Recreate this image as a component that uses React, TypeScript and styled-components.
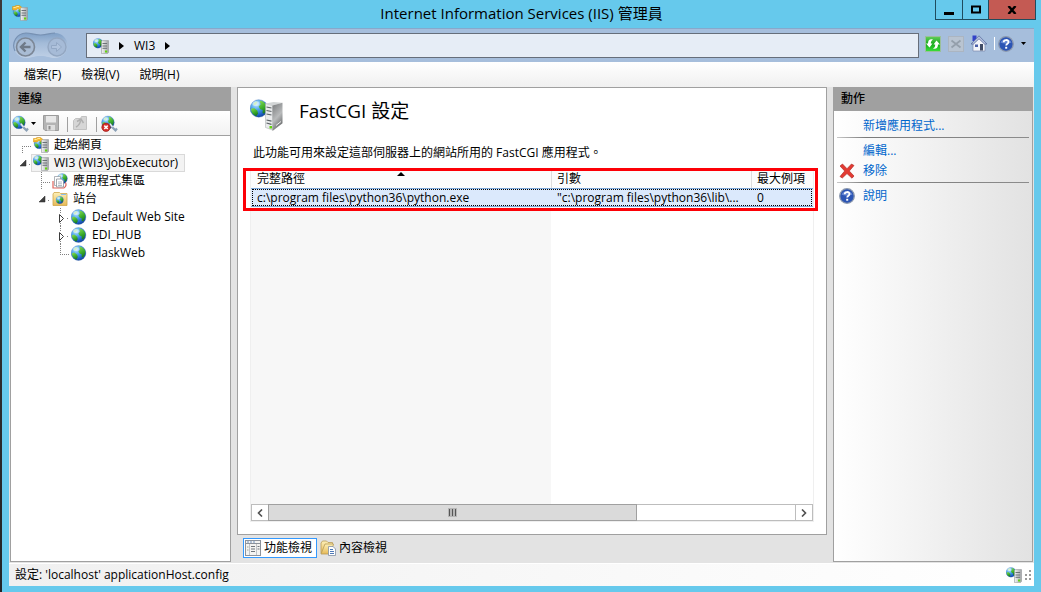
import React, { useState } from "react";
import styled, { createGlobalStyle, css } from "styled-components";

const GlobalStyle = createGlobalStyle`
  * { box-sizing: border-box; }
  body {
    margin: 0;
    font-family: "Open Sans", "Noto Sans CJK TC", sans-serif;
    font-size: 12px;
    line-height: 18px;
    color: #000;
  }
  button {
    font: inherit;
    color: inherit;
    background: none;
    border: 0;
    padding: 0;
    margin: 0;
  }
  svg { display: block; flex: none; }
`;

const Desktop = styled.div`
  display: flex;
  min-height: 100vh;
  padding-left: 2px;
  background: linear-gradient(#3c3838, #232426);
`;

const Window = styled.div`
  flex: 1;
  min-width: 0;
  display: flex;
  flex-direction: column;
  padding: 0 7px 6px;
  background: #66c9ec;
`;

const TitleBar = styled.header`
  display: grid;
  grid-template-columns: 1fr auto 1fr;
  height: 28px;
`;

const TitleIcon = styled.div`
  padding: 5px 0 0 3px;
`;

const Title = styled.h1`
  margin: 0;
  font-size: 15px;
  font-weight: 400;
  line-height: 26px;
  white-space: nowrap;
`;

const WindowButtons = styled.div`
  justify-self: end;
  display: flex;
  height: 20px;
  margin-right: -2px;
  border: 1px solid #1f4c5e;
  border-top: 0;
`;

const WindowButton = styled.button<{ $close?: boolean }>`
  display: flex;
  align-items: center;
  justify-content: center;
  width: ${(p) => (p.$close ? 47 : 26)}px;
  background: ${(p) => (p.$close ? "#c45a53" : "transparent")};
  & + & { border-left: 1px solid #1f4c5e; }
`;

const Client = styled.div`
  flex: 1;
  display: flex;
  flex-direction: column;
  background: #e3e3e3;
`;

const NavBar = styled.div`
  display: flex;
  align-items: center;
  height: 34px;
  padding: 0 8px 0 4px;
  border-top: 1px solid #86a9cc;
  background: #a6bedc;
`;

const AddressBar = styled.nav`
  flex: 1;
  display: flex;
  align-items: center;
  gap: 10px;
  height: 25px;
  margin: 0 6px 0 18px;
  padding: 0 6px;
  border: 1px solid #666e7a;
  background: #e6edf6;
`;

const NavTools = styled.div`
  display: flex;
  align-items: center;
  gap: 7px;
  padding-bottom: 4px;
`;

const IconButton = styled.button`
  display: flex;
  align-items: center;
`;

const ToolMenuButton = styled(IconButton)`
  margin: 0 3px 0 -2px;
`;

const NavSeparator = styled.span`
  width: 1px;
  height: 13px;
  background: #fff;
  margin-right: -4px;
`;

const MenuBar = styled.nav`
  display: flex;
  align-items: center;
  gap: 20px;
  height: 25px;
  padding-left: 15px;
  background: linear-gradient(#fff, #f0f0f0);
`;

const Workspace = styled.main`
  flex: 1;
  display: grid;
  grid-template-columns: 221px minmax(0, 1fr) 200px;
  gap: 6px;
  padding: 0 1px 1px;
`;

const Pane = styled.section<{ $shaded?: boolean }>`
  display: flex;
  flex-direction: column;
  border: 1px solid #a0a0a0;
  border-top: 0;
  background: ${(p) => (p.$shaded ? "linear-gradient(90deg, #fff, #e2e2e2)" : "#fff")};
`;

const PaneTitle = styled.h2`
  margin: 0;
  height: 24px;
  padding-left: 7px;
  font-size: 12px;
  font-weight: 500;
  line-height: 24px;
  background: #a0a0a0;
`;

const TreeToolbar = styled.div`
  display: flex;
  align-items: center;
  height: 25px;
  padding-left: 1px;
  gap: 4px;
  border-bottom: 1px solid #a0a0a0;
  background: linear-gradient(#fff, #f2f2f2);
`;

const ToolSeparator = styled.span`
  width: 1px;
  height: 15px;
  margin: 2px 0 0 4px;
  background: #a0a0a0;
`;

const Tree = styled.ul`
  list-style: none;
  margin: 0;
  padding: 0 0 0 3px;
`;

const TreeRow = styled.li<{ $level: number }>`
  display: flex;
  height: 18px;
  padding-left: ${(p) => p.$level * 19}px;
`;

const TreeLabel = styled.span<{ $selected?: boolean }>`
  display: flex;
  align-items: center;
  gap: 5px;
  padding: 0 6px 0 1px;
  line-height: 16px;
  white-space: nowrap;
  border: 1px solid ${(p) => (p.$selected ? "#d9d9d9" : "transparent")};
  background: ${(p) => (p.$selected ? "#f3f3f3" : "transparent")};
`;

const Center = styled.div`
  display: flex;
  flex-direction: column;
`;

const Feature = styled.section`
  flex: 1;
  display: flex;
  flex-direction: column;
  padding: 10px 12px 12px;
  border: 1px solid #a0a0a0;
  background: #fff;
`;

const FeatureHeader = styled.div`
  display: flex;
  gap: 14px;
  height: 46px;
`;

const FeatureTitle = styled.h2`
  margin: 0;
  font-size: 19px;
  font-weight: 400;
  line-height: 27px;
`;

const Description = styled.p`
  margin: 0;
  padding-left: 3px;
  height: 26px;
  white-space: nowrap;
`;

const ListBox = styled.div`
  position: relative;
  flex: 1;
  display: flex;
  flex-direction: column;
  border: 1px solid #efefef;
  border-top: 0;
`;

const ListBody = styled.div`
  flex: 1;
  background: linear-gradient(90deg, #f7f7f7 300px, #fff 300px);
`;

const Highlight = styled.div`
  position: absolute;
  top: -2px;
  left: -8px;
  right: -5px;
  height: 43px;
  border: 3px solid #fd0006;
  pointer-events: none;
`;

const AppTable = styled.table`
  width: 100%;
  table-layout: fixed;
  border-collapse: separate;
  border-spacing: 0;
`;

const HeaderCell = styled.th<{ $width?: number }>`
  position: relative;
  width: ${(p) => (p.$width ? p.$width + "px" : "auto")};
  height: 18px;
  padding: 0 0 0 6px;
  font-weight: 400;
  line-height: 18px;
  text-align: left;
  white-space: nowrap;
  background: #fcfcfc;
  & + & { padding-left: 5px; border-left: 1px solid #dedede; }
`;

const SortMark = styled.span`
  position: absolute;
  top: 2px;
  left: 50%;
  margin-left: -4px;
  border: 4px solid transparent;
  border-top: 0;
  border-bottom-color: #000;
`;

const Cell = styled.td`
  height: 19px;
  padding: 0 6px;
  line-height: 15px;
  white-space: nowrap;
`;

const SelectedRow = styled.tr`
  background: #dbe9fc;
  box-shadow: inset 0 1px #7da7d8, inset 0 -1px #7da7d8;
  outline: 1px dotted #000;
  outline-offset: -2px;
`;

const ScrollBar = styled.div`
  display: flex;
  height: 17px;
  border: 1px solid #bdbdbd;
`;

const ScrollArrow = styled.button`
  display: flex;
  align-items: center;
  justify-content: center;
  width: 16px;
  background: #fff;
`;

const ScrollTrack = styled.div`
  flex: 1;
  display: flex;
  margin: -1px 0;
  border-right: 1px solid #bdbdbd;
`;

const ScrollThumb = styled.div`
  display: flex;
  align-items: center;
  justify-content: center;
  gap: 2px;
  width: 70%;
  border: 1px solid #a0a0a0;
  background: #dadada;
  & > i { width: 1px; height: 7px; outline: 1px solid #70707055; background: #555; }
`;

const ViewTabs = styled.div`
  display: flex;
  gap: 1px;
  height: 27px;
  padding: 3px 0 4px 6px;
`;

const ViewTab = styled.button<{ $active?: boolean }>`
  display: flex;
  align-items: center;
  gap: 3px;
  padding: 0 4px 0 1px;
  border: 1px solid transparent;
  ${(p) => p.$active && css`
    border-color: #3399ff;
    background: #fff;
  `}
`;

const Actions = styled.div`
  padding: 4px 3px;
`;

const Rule = styled.hr`
  height: 1px;
  margin: 2px 0;
  border: 0;
  background: linear-gradient(90deg, #c8c8c8, #7a7a7a 15%, #8c8c8c);
`;

const ActionLink = styled.a`
  display: grid;
  grid-template-columns: 16px 1fr;
  gap: 8px;
  align-items: center;
  height: 20px;
  padding: 2px 0 0 2px;
  color: #0066cc;
  text-decoration: none;
`;

const StatusBar = styled.footer`
  display: flex;
  align-items: center;
  justify-content: space-between;
  height: 23px;
  padding: 0 2px 0 6px;
  border-top: 1px solid #fff;
  background: linear-gradient(90deg, #f0f0f0, #fff);
`;

const StatusIcons = styled.div`
  display: flex;
  align-items: center;
  gap: 2px;
`;

const Definitions = styled.svg`
  position: absolute;
`;

function Gradients() {
  return (
    <Definitions width="0" height="0" aria-hidden="true">
      <defs>
        <radialGradient id="sea" cx="0.35" cy="0.25" r="0.85">
          <stop offset="0" stopColor="#c4ecff" />
          <stop offset="0.4" stopColor="#4aa3ec" />
          <stop offset="0.75" stopColor="#1d5fc4" />
          <stop offset="1" stopColor="#0d3488" />
        </radialGradient>
        <linearGradient id="land" x1="0" x2="0.4" y1="0" y2="1">
          <stop offset="0" stopColor="#8fdc5a" />
          <stop offset="0.6" stopColor="#3fb02c" />
          <stop offset="1" stopColor="#1c7d22" />
        </linearGradient>
        <linearGradient id="case" x1="0" x2="1">
          <stop offset="0" stopColor="#f4f4f4" />
          <stop offset="1" stopColor="#a0a3a6" />
        </linearGradient>
        <linearGradient id="caseSide" x1="0" x2="0.4" y2="1">
          <stop offset="0" stopColor="#77797b" />
          <stop offset="0.6" stopColor="#b9bbbc" />
          <stop offset="1" stopColor="#6d6f70" />
        </linearGradient>
        <linearGradient id="folder" x1="0" x2="0" y1="0" y2="1">
          <stop offset="0" stopColor="#fdf0b8" />
          <stop offset="1" stopColor="#e6b956" />
        </linearGradient>
        <linearGradient id="greenTile" x1="0" x2="0" y1="0" y2="1">
          <stop offset="0" stopColor="#63cf5a" />
          <stop offset="0.5" stopColor="#16a81c" />
          <stop offset="1" stopColor="#3be03a" />
        </linearGradient>
        <linearGradient id="pill" x1="0" x2="0" y1="0" y2="1">
          <stop offset="0" stopColor="#7f9fc6" />
          <stop offset="0.4" stopColor="#a3bbd8" />
          <stop offset="1" stopColor="#bfd0e6" />
        </linearGradient>
      </defs>
    </Definitions>
  );
}

/* Globe in a 16 unit box */
const GlobeShape = () => (
  <g>
    <circle cx="7.5" cy="8" r="7.4" fill="url(#sea)" stroke="#3a68ad" strokeWidth="0.3" />
    <path d="M8.200 1.400C11 1.200 13.400 3.600 14.400 6.400L13.800 9.800 12 12.600 10.600 11.800 10.800 9.400 8.600 8.600 7.400 6.400 9 4.600z" fill="url(#land)" />
    <path d="M.8 8.200L3.400 7.600 6.200 9.800 6.800 12 5.400 14.600C2.800 13.600 1 11.400.8 8.200z" fill="url(#land)" />
    <path d="M3.400 3.200L6.200 2 5.400 4.600 3 5.400z" fill="#b5e8a0" />
    <ellipse cx="5" cy="4" rx="3" ry="2" fill="#fff" opacity="0.4" />
  </g>
);

const Globe = () => (
  <svg width="16" height="16" viewBox="0 0 16 16"><GlobeShape /></svg>
);

const ServerIcon = ({ home }: { home?: boolean }) => (
  <svg width="16" height="16" viewBox="0 0 16 16">
    <g transform={home ? "translate(1 1) scale(.7)" : "scale(.66)"}><GlobeShape /></g>
    {home && (
      <g>
        <path d="M.5 1.500h1.800L4 .5h3.500L10 2.500v2H7.500L6 3.500 4 5H.5z" fill="#f6b92e" stroke="#cf8d12" strokeWidth=".5" />
        <path d="M1.500 2.500h2L5 1.500h2" fill="none" stroke="#ffe89a" />
      </g>
    )}
    <path d="M8.500 3.400L9.600 2.600h5.900v12l-1 1h-6z" fill="url(#case)" stroke="#93979a" strokeWidth=".6" />
    <path d="M9.500 5.500h4.600M9.500 8h4.600M9.500 10.300h4.600" stroke="#6c7277" strokeWidth="1" />
    <rect x="12" y="12.500" width="2.200" height="2" fill="#62d40c" />
  </svg>
);

const BigServerIcon = () => (
  <svg width="35" height="36" viewBox="0 0 35 36">
    <g transform="translate(0 1) scale(1.18)"><GlobeShape /></g>
    <path d="M15.500 5.500l7 2v24.500l-7-2.500z" fill="#e9ebec" stroke="#a5a9ab" strokeWidth=".5" />
    <path d="M15.500 5.500l8-1.500 9 .8-10 2.700z" fill="#d2d5d6" />
    <path d="M22.500 7.500l10-2.700v20.500l-10 7.700z" fill="url(#caseSide)" />
    <path d="M16.500 9l5 1M16.500 12.500l5 1M16.500 16l5 1M16.500 22l5 1.200M16.500 25l5 1.300" stroke="#5c6266" strokeWidth="1.200" />
    <path d="M26 27.500l5-4" stroke="#ececec" />
    <rect x="19.500" y="28" width="2.500" height="2.500" fill="#62d40c" />
  </svg>
);

const ConnectIcon = ({ off }: { off?: boolean }) => (
  <svg width="17" height="17" viewBox="0 0 17 17">
    <g transform="translate(.5 .5) scale(.86)"><GlobeShape /></g>
    <path d="M8.500 8.500l3 4 3 2.800 1.500-1.700" fill="none" stroke="#8ba0b6" strokeWidth="2.200" />
    <path d="M9 9l2.500 3" stroke="#e6eff7" strokeWidth="1.200" />
    {off && (
      <g>
        <circle cx="5" cy="12.300" r="4.200" fill="#d3302c" stroke="#951410" strokeWidth=".6" />
        <path d="M3.300 10.600l3.400 3.400M6.700 10.600l-3.400 3.400" stroke="#fff" strokeWidth="1.500" />
      </g>
    )}
  </svg>
);

const SaveIcon = () => (
  <svg width="16" height="16" viewBox="0 0 16 16">
    <path d="M.5.5h15v15H2L.5 14z" fill="#b4b4b4" stroke="#9c9c9c" />
    <rect x="3" y="1" width="10" height="6.500" fill="#e8e8e8" />
    <rect x="4" y="10" width="8" height="5.500" fill="#dedede" />
    <rect x="5.500" y="11" width="2" height="3.500" fill="#8c8c8c" />
  </svg>
);

const UpFolderIcon = () => (
  <svg width="16" height="16" viewBox="0 0 16 16">
    <path d="M1.500 5.500l2-2h5l1-2h5v13h-13z" fill="#d6d6d6" stroke="#c2c2c2" />
    <path d="M4 12c2-1 4-3 4.500-6.500M5 6.500l4-2.500 2.500 4" fill="none" stroke="#b0b0b0" strokeWidth="1.500" />
  </svg>
);

const PoolsIcon = () => (
  <svg width="16" height="16" viewBox="0 0 16 16">
    <g transform="translate(5 0) scale(.7)"><GlobeShape /></g>
    <path d="M1 8v7h11" fill="none" stroke="#e0655d" strokeWidth="1.200" />
    <path d="M2.500 3.500h6v9h-6z" fill="#fff" stroke="#9aa1a8" strokeWidth=".8" />
    <path d="M4.500 6h5l2 2v6h-7z" fill="#fff" stroke="#8b9299" strokeWidth=".8" />
    <path d="M6 9h4M6 10.800h4M6 12.500h4" stroke="#9aa7b5" strokeWidth=".8" />
    <path d="M13.500 9.500c1 2 .5 4-1.500 5.500" fill="none" stroke="#e0655d" strokeWidth="1.200" />
  </svg>
);

const SitesIcon = () => (
  <svg width="16" height="16" viewBox="0 0 16 16">
    <path d="M1 3l1-1.500h5.500l1 1h6.500v12H1z" fill="url(#folder)" stroke="#cfa64a" strokeWidth=".8" />
    <path d="M9 3.500h5" stroke="#8fc0e8" />
    <g transform="translate(4 5) scale(.5)"><GlobeShape /></g>
  </svg>
);

const NavPill = () => (
  <svg width="55" height="28" viewBox="0 0 55 28">
    <path d="M13 1c6 0 7 2 14.500 2S36 1 42 1a12.500 12.500 0 0 1 0 25c-6 0-7-2-14.500-2S19 26 13 26A12.500 12.500 0 0 1 13 1z" fill="url(#pill)" />
    <path d="M2 19A12.500 12.500 0 0 1 13 1c6 0 7 2 14.500 2S36 1 42 1" fill="none" stroke="#7791b3" strokeWidth="1.200" />
    <circle cx="12.500" cy="15" r="9" fill="#a9bcd4" stroke="#7c8796" strokeWidth="1.600" />
    <path d="M17.500 15H9M12.500 10.500L8 15l4.500 4.500" fill="none" stroke="#6f7a88" strokeWidth="2.400" />
    <circle cx="44" cy="15" r="9" fill="#a6bbd7" stroke="#93a7c2" strokeWidth="1.400" />
    <path d="M38.500 13.500h5v-3l5 4.500-5 4.500v-3h-5z" fill="#b0c3dd" stroke="#93a8c5" />
  </svg>
);

const RefreshIcon = () => (
  <svg width="16" height="16" viewBox="0 0 16 16">
    <rect x=".5" y=".5" width="15" height="15" fill="url(#greenTile)" stroke="#9ac09a" />
    <path d="M1 7.500L4.500 11.500 7.500 7.500H5.800C5.800 5.500 6.500 4.500 8 3.500 5 2.500 3 4 3 7.500zM15 8.500L11.500 4.500 8.500 8.500H10.200c0 2-.5 3-2.200 4 3 1 5-.5 5-4z" fill="#fff" />
  </svg>
);

const StopIcon = () => (
  <svg width="16" height="16" viewBox="0 0 16 16">
    <rect x=".5" y=".5" width="15" height="15" fill="#b9c4d1" stroke="#abb5c1" />
    <path d="M3.500 4.500l9 7M12.500 4.500l-9 7" stroke="#949fab" strokeWidth="1.800" />
  </svg>
);

const HomeIcon = () => (
  <svg width="16" height="17" viewBox="0 0 16 17">
    <path d="M1.500.5h4V6h-4z" fill="#3342c8" />
    <path d="M2 8.500L8 3l6 5.500v7.500H2z" fill="#f3f5fa" stroke="#7c8bac" strokeWidth=".7" />
    <path d="M8 .8L16 9H13.500L8 3.800 2.500 9H0z" fill="#b3c0dc" stroke="#52649a" strokeWidth=".7" />
    <rect x="4" y="9.500" width="3" height="2.500" fill="#4a5fa8" />
    <rect x="9" y="9" width="3" height="6.500" fill="#414c66" />
  </svg>
);

const HelpIcon = () => (
  <svg width="16" height="16" viewBox="0 0 16 16">
    <circle cx="8" cy="8" r="7.300" fill="#2c55b4" stroke="#8c99ae" strokeWidth="1.300" />
    <path d="M2.500 6.500a6 6 0 0 1 11 0c-3 1.500-8 1.500-11 0z" fill="#7d9de0" opacity=".7" />
    <path d="M5.700 6.300c0-3 4.800-3 4.800-.2 0 1.600-2.300 1.700-2.300 3.500" fill="none" stroke="#fff" strokeWidth="1.800" />
    <rect x="7.200" y="10.800" width="2" height="1.900" fill="#fff" />
  </svg>
);

const RemoveIcon = () => (
  <svg width="16" height="16" viewBox="0 0 16 16">
    <path d="M1 3l2.500-2L8 5.700 12.500 1 15 2.500 10.300 8l4.700 5-2 2.200L8 10.600 3.300 15 1 13.500 5.700 8z" fill="#e33b33" stroke="#a8201b" strokeWidth=".6" />
  </svg>
);

const FeaturesViewIcon = () => (
  <svg width="16" height="16" viewBox="0 0 16 16">
    <rect x=".5" y=".5" width="15" height="15" fill="#f4f4f2" stroke="#8c929a" />
    <path d="M1 3.500h14" stroke="#8c929a" />
    <path d="M2 2h2m1 0h2m1 0h2" stroke="#6e90bd" />
    <path d="M4.500 4v11M11.500 4v11" stroke="#c2c5c9" />
    <path d="M6 6.500h4M6 9h4M6 11.500h4M12.500 6.500h2M12.500 9h2" stroke="#70767c" />
    <path d="M2 7h1.500M2 10h1.500" stroke="#a3a898" />
  </svg>
);

const ContentViewIcon = () => (
  <svg width="16" height="16" viewBox="0 0 16 16">
    <path d="M1 13.500V3l1.500-2h4L8 2.500h4.500V6" fill="url(#folder)" stroke="#b89b57" strokeWidth=".8" />
    <path d="M5 4h8.500l-2.500 10H1z" fill="url(#folder)" stroke="#b89b57" strokeWidth=".8" />
    <path d="M8.500 6.500h4.500l2.500 2.500v6.500h-7z" fill="#fff" stroke="#8190a5" strokeWidth=".8" />
    <path d="M10 9.500h3M10 11.500h4M10 13.500h4" stroke="#4d79b8" />
  </svg>
);

const GripIcon = () => (
  <svg width="8" height="11" viewBox="0 0 8 11" fill="#9a9a9a">
    <path d="M5 0h2v2H5zM5 4h2v2H5zM1 4h2v2H1zM5 8h2v2H5zM1 8h2v2H1z" />
  </svg>
);

const Chevron = () => (
  <svg width="5" height="8" viewBox="0 0 5 8"><path d="M0 0l5 4-5 4z" /></svg>
);

const DropMark = () => (
  <svg width="5" height="3" viewBox="0 0 5 3"><path d="M0 0h5L2.500 3z" /></svg>
);

type Branch = "first" | "open" | "tee" | "closed" | "end";

/* Connector lines and expander for one tree row */
const BranchMark = ({ kind }: { kind: Branch }) => (
  <svg width="17" height="18" viewBox="0 0 17 18" shapeRendering="crispEdges">
    <g stroke="#808080" strokeDasharray="1 1" fill="none">
      {kind === "first" && <path d="M8.500 10v8M8 10.500h11" />}
      {kind === "tee" && <path d="M8.500 0v18M8 10.500h11" />}
      {kind === "end" && <path d="M8.500 0v10M8 10.500h9" />}
      {kind === "open" && <path d="M15 10.500h2" />}
      {kind === "closed" && <path d="M8.500 0v5M8.500 15v3M15 10.500h2" />}
    </g>
    {kind === "open" && (
      <path d="M12 6v6H6z" fill="#404040" stroke="#262626" strokeWidth=".5" shapeRendering="auto" />
    )}
    {kind === "closed" && (
      <path d="M7.500 6.500l4 4-4 4z" fill="#fff" stroke="#3c3c3c" shapeRendering="auto" />
    )}
  </svg>
);

const nodes: { label: string; level: number; branch: Branch; icon: React.ReactNode }[] = [
  { label: "起始網頁", level: 0, branch: "first", icon: <ServerIcon home /> },
  { label: "WI3 (WI3\\JobExecutor)", level: 0, branch: "open", icon: <ServerIcon /> },
  { label: "應用程式集區", level: 1, branch: "tee", icon: <PoolsIcon /> },
  { label: "站台", level: 1, branch: "open", icon: <SitesIcon /> },
  { label: "Default Web Site", level: 2, branch: "closed", icon: <Globe /> },
  { label: "EDI_HUB", level: 2, branch: "closed", icon: <Globe /> },
  { label: "FlaskWeb", level: 2, branch: "end", icon: <Globe /> },
];

export default function App() {
  const [selected, setSelected] = useState(1);
  return (
    <Desktop>
      <GlobalStyle />
      <Gradients />
      <Window>
        <TitleBar>
          <TitleIcon><ServerIcon home /></TitleIcon>
          <Title>Internet Information Services (IIS) 管理員</Title>
          <WindowButtons>
            <WindowButton aria-label="最小化">
              <svg width="10" height="13"><path d="M0 9h10v3H0z" /></svg>
            </WindowButton>
            <WindowButton aria-label="最大化">
              <svg width="10" height="9"><path d="M1 1.500h8v6H1z" fill="none" stroke="#000" strokeWidth="2" /></svg>
            </WindowButton>
            <WindowButton $close aria-label="關閉">
              <svg width="10" height="8"><path d="M1.500 0l7 8M8.500 0l-7 8" stroke="#000" strokeWidth="2.400" /></svg>
            </WindowButton>
          </WindowButtons>
        </TitleBar>
        <Client>
          <NavBar>
            <NavPill />
            <AddressBar aria-label="位址">
              <ServerIcon />
              <Chevron />
              <span>WI3</span>
              <Chevron />
            </AddressBar>
            <NavTools>
              <IconButton aria-label="重新整理"><RefreshIcon /></IconButton>
              <IconButton aria-label="停止" disabled><StopIcon /></IconButton>
              <IconButton aria-label="首頁"><HomeIcon /></IconButton>
              <NavSeparator />
              <IconButton aria-label="說明"><HelpIcon /></IconButton>
              <IconButton aria-label="更多"><DropMark /></IconButton>
            </NavTools>
          </NavBar>
          <MenuBar>
            <button>檔案(F)</button>
            <button>檢視(V)</button>
            <button>說明(H)</button>
          </MenuBar>
          <Workspace>
            <Pane>
              <PaneTitle>連線</PaneTitle>
              <TreeToolbar>
                <IconButton aria-label="連線"><ConnectIcon /></IconButton>
                <ToolMenuButton aria-label="連線選項"><DropMark /></ToolMenuButton>
                <IconButton aria-label="儲存" disabled><SaveIcon /></IconButton>
                <ToolSeparator />
                <IconButton aria-label="向上" disabled><UpFolderIcon /></IconButton>
                <ToolSeparator />
                <IconButton aria-label="中斷連線"><ConnectIcon off /></IconButton>
              </TreeToolbar>
              <Tree role="tree">
                {nodes.map((n, i) => (
                  <TreeRow
                    key={n.label}
                    $level={n.level}
                    role="treeitem"
                    aria-selected={selected === i}
                    onClick={() => setSelected(i)}
                  >
                    <BranchMark kind={n.branch} />
                    <TreeLabel $selected={selected === i}>
                      {n.icon}
                      {n.label}
                    </TreeLabel>
                  </TreeRow>
                ))}
              </Tree>
            </Pane>
            <Center>
              <Feature>
                <FeatureHeader>
                  <BigServerIcon />
                  <FeatureTitle>FastCGI 設定</FeatureTitle>
                </FeatureHeader>
                <Description>此功能可用來設定這部伺服器上的網站所用的 FastCGI 應用程式。</Description>
                <ListBox>
                  <AppTable>
                    <thead>
                      <tr>
                        <HeaderCell $width={300}>完整路徑<SortMark /></HeaderCell>
                        <HeaderCell $width={200}>引數</HeaderCell>
                        <HeaderCell>最大例項</HeaderCell>
                      </tr>
                    </thead>
                    <tbody>
                      <SelectedRow>
                        <Cell>c:\program files\python36\python.exe</Cell>
                        <Cell>"c:\program files\python36\lib\...</Cell>
                        <Cell>0</Cell>
                      </SelectedRow>
                    </tbody>
                  </AppTable>
                  <ListBody />
                  <ScrollBar>
                    <ScrollArrow aria-label="向左捲動">
                      <svg width="6" height="8"><path d="M5 .5L1.500 4 5 7.500" fill="none" stroke="#505050" strokeWidth="1.600" /></svg>
                    </ScrollArrow>
                    <ScrollTrack>
                      <ScrollThumb><i /><i /><i /></ScrollThumb>
                    </ScrollTrack>
                    <ScrollArrow aria-label="向右捲動">
                      <svg width="6" height="8"><path d="M1 .5L4.500 4 1 7.500" fill="none" stroke="#505050" strokeWidth="1.600" /></svg>
                    </ScrollArrow>
                  </ScrollBar>
                  <Highlight />
                </ListBox>
              </Feature>
              <ViewTabs>
                <ViewTab $active><FeaturesViewIcon />功能檢視</ViewTab>
                <ViewTab><ContentViewIcon />內容檢視</ViewTab>
              </ViewTabs>
            </Center>
            <Pane $shaded>
              <PaneTitle>動作</PaneTitle>
              <Actions>
                <ActionLink href="#add"><span />新增應用程式...</ActionLink>
                <Rule />
                <ActionLink href="#edit"><span />編輯...</ActionLink>
                <ActionLink href="#remove"><RemoveIcon />移除</ActionLink>
                <Rule />
                <ActionLink href="#help"><HelpIcon />說明</ActionLink>
              </Actions>
            </Pane>
          </Workspace>
          <StatusBar>
            <span>設定: 'localhost' applicationHost.config</span>
            <StatusIcons><ServerIcon /><GripIcon /></StatusIcons>
          </StatusBar>
        </Client>
      </Window>
    </Desktop>
  );
}
